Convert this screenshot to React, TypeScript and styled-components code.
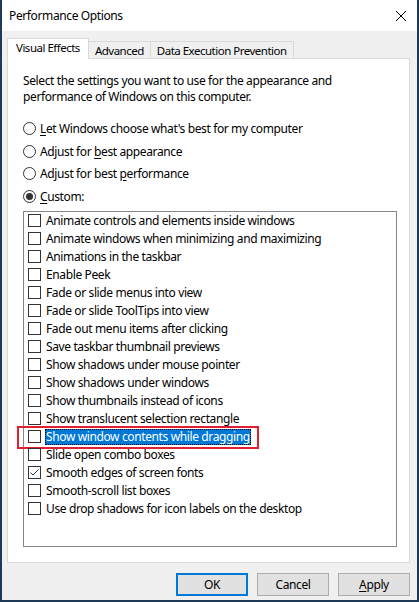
import React from "react";
import styled, { createGlobalStyle } from "styled-components";

const GlobalStyle = createGlobalStyle`
  html, body { margin: 0; padding: 0; background: #ffffff; }
  * { box-sizing: border-box; }
  body {
    font-family: "Noto Sans", "Liberation Sans", sans-serif;
    font-size: 12px;
    letter-spacing: -0.38px;
    color: #000;
  }
`;

const Window = styled.div`
  width: 419px;
  height: 602px;
  display: flex;
  flex-direction: column;
  border-left: 2px solid #1f3a56;
  border-right: 2px solid #1f3a56;
  border-bottom: 2px solid #1f3a56;
  background: #f0f0f0;
`;

const TitleBar = styled.div`
  height: 31px;
  flex: none;
  background: #ffffff;
  display: flex;
  align-items: center;
  justify-content: space-between;
  padding: 0 10px 0 7px;
`;

const CloseButton = styled.div`
  width: 12px;
  height: 12px;
  display: flex;
`;

const Body = styled.div`
  flex: 1;
  display: flex;
  flex-direction: column;
  padding: 7px 7px 0 5px;
`;

const TabStrip = styled.div`
  display: flex;
  align-items: flex-end;
  height: 21px;
  position: relative;
  z-index: 1;
  margin-bottom: -1px;
`;

const Tab = styled.div<{ $active?: boolean }>`
  height: ${(p) => (p.$active ? 21 : 18)}px;
  padding: 0 ${(p) => (p.$active ? 8 : 6)}px ${(p) => (p.$active ? 2 : 0)}px;
  display: flex;
  align-items: center;
  font-size: 11.5px;
  letter-spacing: -0.5px;
  background: ${(p) => (p.$active ? "#ffffff" : "#f0f0f0")};
  border: 1px solid #d9d9d9;
  border-bottom: 1px solid ${(p) => (p.$active ? "#ffffff" : "#d9d9d9")};
  margin-left: ${(p) => (p.$active ? 0 : -1)}px;
  white-space: nowrap;
`;

const Panel = styled.div`
  height: 505px;
  flex: none;
  background: #ffffff;
  border: 1px solid #d9d9d9;
  padding: 14px 12px 15px 15px;
  display: flex;
  flex-direction: column;
`;

const Intro = styled.div`
  line-height: 16px;
  margin-bottom: 12px;
`;

const RadioRow = styled.div`
  height: 22.7px;
  display: flex;
  align-items: center;
  gap: 4px;
`;

const RadioCircle = styled.span<{ $checked?: boolean }>`
  width: 13px;
  height: 13px;
  border-radius: 50%;
  border: 1px solid #333333;
  background: #fff;
  display: flex;
  align-items: center;
  justify-content: center;
  flex: none;
  &::after {
    content: "";
    display: ${(p) => (p.$checked ? "block" : "none")};
    width: 7px;
    height: 7px;
    border-radius: 50%;
    background: #333333;
  }
`;

const Key = styled.span`
  text-decoration: underline;
  text-underline-offset: 2px;
`;

const ListBox = styled.div`
  flex: 1;
  margin-top: 3px;
  border: 1px solid #828790;
  background: #fff;
  padding: 0 0 0 4px;
  position: relative;
`;

const Item = styled.div`
  height: 18px;
  display: flex;
  align-items: center;
  gap: 4px;
  position: relative;
`;

const Box = styled.span`
  width: 13px;
  height: 13px;
  border: 1px solid #333333;
  background: #fff;
  flex: none;
  display: flex;
`;

const Label = styled.span<{ $selected?: boolean }>`
  height: 16px;
  display: flex;
  align-items: center;
  padding: 0 1px;
  white-space: nowrap;
  background: ${(p) => (p.$selected ? "#0078d7" : "transparent")};
  color: ${(p) => (p.$selected ? "#ffffff" : "#000000")};
  outline: ${(p) => (p.$selected ? "1px dotted #000000" : "none")};
  outline-offset: -1px;
`;

const RedMark = styled.div`
  position: absolute;
  left: -11px;
  top: -2px;
  width: 242px;
  height: 23px;
  border: 2px solid #e0202e;
  pointer-events: none;
`;

const Footer = styled.div`
  display: flex;
  justify-content: flex-end;
  gap: 9px;
  padding: 10px 0 0 0;
`;

const Button = styled.div<{ $default?: boolean }>`
  width: 72px;
  height: 23px;
  background: #e1e1e1;
  border: ${(p) => (p.$default ? "2px solid #0078d7" : "1px solid #adadad")};
  display: flex;
  align-items: center;
  justify-content: center;
`;

const items: { label: string; checked?: boolean; selected?: boolean }[] = [
  { label: "Animate controls and elements inside windows" },
  { label: "Animate windows when minimizing and maximizing" },
  { label: "Animations in the taskbar" },
  { label: "Enable Peek" },
  { label: "Fade or slide menus into view" },
  { label: "Fade or slide ToolTips into view" },
  { label: "Fade out menu items after clicking" },
  { label: "Save taskbar thumbnail previews" },
  { label: "Show shadows under mouse pointer" },
  { label: "Show shadows under windows" },
  { label: "Show thumbnails instead of icons" },
  { label: "Show translucent selection rectangle" },
  { label: "Show window contents while dragging", selected: true },
  { label: "Slide open combo boxes" },
  { label: "Smooth edges of screen fonts", checked: true },
  { label: "Smooth-scroll list boxes" },
  { label: "Use drop shadows for icon labels on the desktop" },
];

export default function App() {
  return (
    <>
      <GlobalStyle />
      <Window>
        <TitleBar>
          <span>Performance Options</span>
          <CloseButton>
            <svg width="12" height="12" viewBox="0 0 12 12">
              <path d="M1 1 L11 11 M11 1 L1 11" stroke="#000" strokeWidth="1" />
            </svg>
          </CloseButton>
        </TitleBar>
        <Body>
          <TabStrip>
            <Tab $active>Visual Effects</Tab>
            <Tab>Advanced</Tab>
            <Tab>Data Execution Prevention</Tab>
          </TabStrip>
          <Panel>
            <Intro>
              Select the settings you want to use for the appearance and
              <br />
              performance of Windows on this computer.
            </Intro>
            <RadioRow>
              <RadioCircle />
              <span>
                <Key>L</Key>et Windows choose what's best for my computer
              </span>
            </RadioRow>
            <RadioRow>
              <RadioCircle />
              <span>
                Adjust for <Key>b</Key>est appearance
              </span>
            </RadioRow>
            <RadioRow>
              <RadioCircle />
              <span>
                Adjust for best <Key>p</Key>erformance
              </span>
            </RadioRow>
            <RadioRow>
              <RadioCircle $checked />
              <span>
                <Key>C</Key>ustom:
              </span>
            </RadioRow>
            <ListBox>
              {items.map((it) => (
                <Item key={it.label}>
                  <Box>
                    {it.checked && (
                      <svg width="11" height="11" viewBox="0 0 11 11">
                        <path d="M1.5 5.5 L4 8 L9.5 2.5" fill="none" stroke="#333" strokeWidth="1" />
                      </svg>
                    )}
                  </Box>
                  <Label $selected={it.selected}>{it.label}</Label>
                  {it.selected && <RedMark />}
                </Item>
              ))}
            </ListBox>
          </Panel>
          <Footer>
            <Button $default>OK</Button>
            <Button>Cancel</Button>
            <Button>
              <span>
                <Key>A</Key>pply
              </span>
            </Button>
          </Footer>
        </Body>
      </Window>
    </>
  );
}
